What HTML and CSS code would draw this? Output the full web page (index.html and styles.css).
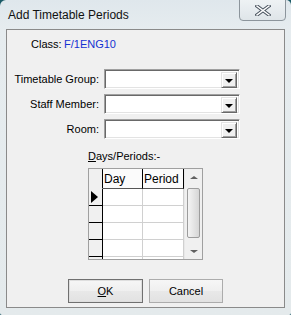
FILE: index.html
```html
<!DOCTYPE html><html><head><meta charset="utf-8">
<title>Add Timetable Periods</title>
<link rel="stylesheet" href="styles.css">
</head>
<body>

<div class="window">
	<div class="titlebar">
		<span class="title">Add Timetable Periods</span>
		<div class="close">
			<svg width="16" height="11" viewBox="0 0 16 11"><path d="M2 1 L14 10 M14 1 L2 10" stroke="#4b5560" stroke-width="3.4" stroke-linecap="square"/><path d="M2 1 L14 10 M14 1 L2 10" stroke="#fff" stroke-width="1.4" stroke-linecap="square"/></svg>
		</div>
	</div>
	<div class="client">
		<div class="classrow"><span class="clabel">Class:</span><span class="cval">F/1ENG10</span></div>

		<div class="form">
			<label>Timetable Group:</label>
			<div class="combo"><div class="drop"><span class="tri"></span></div></div>
			<label>Staff Member:</label>
			<div class="combo"><div class="drop"><span class="tri"></span></div></div>
			<label>Room:</label>
			<div class="combo"><div class="drop"><span class="tri"></span></div></div>
		</div>

		<div class="days"><u>D</u>ays/Periods:-</div>

		<div class="grid">
			<div class="tbl">
				<div class="sel head"></div><div class="cell head">Day</div><div class="cell head">Period</div>
				<div class="sel"><span class="arrow"></span></div><div class="cell"></div><div class="cell"></div>
				<div class="sel"></div><div class="cell"></div><div class="cell"></div>
				<div class="sel"></div><div class="cell"></div><div class="cell"></div>
				<div class="sel"></div><div class="cell"></div><div class="cell"></div>
				<div class="sel"></div><div class="cell"></div><div class="cell"></div>
			</div>
			<div class="scroll">
				<div class="sarrow up"></div>
				<div class="thumb"></div>
				<div class="sarrow down"></div>
			</div>
		</div>

		<div class="buttons">
			<div class="btn default"><u>O</u>K</div>
			<div class="btn">Cancel</div>
		</div>
	</div>
</div>

</body>
</html>
```

FILE: styles.css
```css
body {
	margin: 0;
	background: #1b5a66;
	font-family: "Liberation Sans", Arial, sans-serif;
	font-size: 11px;
	color: #000;
}
.window {
	width: 291px;
	height: 315px;
	box-sizing: border-box;
	border-radius: 6px 5px 2px 2px;
	background: linear-gradient(to bottom, #dfe7ec 0px, #e6ecef 30px, #e4eaec 100%);
	overflow: hidden;
}
.titlebar {
	height: 29px;
	display: flex;
	align-items: flex-start;
	position: relative;
}
.title {
	font-size: 12px;
	margin: 8px 0 0 8px;
	color: #111;
}
.close {
	position: absolute;
	left: 239px;
	top: -1px;
	width: 45px;
	height: 20px;
	border: 1px solid #8c959c;
	border-radius: 0 0 4px 4px;
	background: linear-gradient(to bottom, #eef2f4, #dfe5e9);
	display: flex;
	align-items: center;
	justify-content: center;
}
.client {
	margin: 0 6px 0 6px;
	width: 279px;
	height: 279px;
	box-sizing: border-box;
	border: 1px solid #8a8a8a;
	background: #f0f0f0;
	display: flex;
	flex-direction: column;
}
.classrow {
	margin: 8px 0 0 24px;
	line-height: 13px;
}
.clabel {
	display: inline-block;
	width: 33px;
}
.cval {
	color: #1432d2;
}
.form {
	display: grid;
	grid-template-columns: 92px 136px;
	column-gap: 5px;
	row-gap: 5px;
	margin-top: 18px;
	align-items: center;
}
.form label {
	text-align: right;
}
.combo {
	height: 20px;
	box-sizing: border-box;
	background: #fff;
	border-top: 1px solid #a0a0a0;
	border-left: 1px solid #a0a0a0;
	border-right: 1px solid #fff;
	border-bottom: 1px solid #fff;
	box-shadow: inset 1px 1px 0 #696969, inset -1px -1px 0 #e3e3e3;
	display: flex;
	justify-content: flex-end;
	padding: 2px;
}
.drop {
	width: 16px;
	height: 16px;
	box-sizing: border-box;
	background: #f0f0f0;
	border-top: 1px solid #e3e3e3;
	border-left: 1px solid #e3e3e3;
	border-right: 1px solid #696969;
	border-bottom: 1px solid #696969;
	box-shadow: inset 1px 1px 0 #fff, inset -1px -1px 0 #a0a0a0;
	display: flex;
	align-items: center;
	justify-content: center;
}
.tri {
	width: 0;
	height: 0;
	border-left: 4px solid transparent;
	border-right: 4px solid transparent;
	border-top: 4px solid #000;
	margin-top: 1px;
}
.days {
	margin: 11px 0 0 81px;
	line-height: 13px;
}
.grid {
	margin: 5px 0 0 81px;
	width: 115px;
	height: 92px;
	box-sizing: border-box;
	border: 1px solid #a0a0a0;
	background: #fff;
	display: flex;
	overflow: hidden;
}
.tbl {
	display: grid;
	grid-template-columns: 14px 40px 41px;
	grid-auto-rows: 17px;
	grid-template-rows: 20px;
	align-content: start;
}
.tbl > div {
	box-sizing: border-box;
	border-right: 1px solid #d0d0d0;
	border-bottom: 1px solid #d0d0d0;
}
.tbl .sel {
	background: #f0f0f0;
	border-right: 1px solid #000;
	border-bottom: 1px solid #000;
	display: flex;
	align-items: center;
}
.tbl .head {
	border-right: 1px solid #000;
	border-bottom: 1px solid #555;
	background: #fbfbfb;
	font-size: 12px;
	padding: 3px 0 0 1px;
}
.tbl .sel.head {
	padding: 0;
	background: #f0f0f0;
	border-bottom: 1px solid #f0f0f0;
}
.arrow {
	width: 0;
	height: 0;
	border-top: 6px solid transparent;
	border-bottom: 6px solid transparent;
	border-left: 7px solid #000;
	margin-left: 2px;
}
.scroll {
	width: 18px;
	background: #f0f0f0;
	display: flex;
	flex-direction: column;
	align-items: center;
	border-left: 1px solid #e8e8e8;
	box-sizing: border-box;
}
.sarrow {
	height: 17px;
	width: 100%;
	display: flex;
	align-items: center;
	justify-content: center;
}
.sarrow::after {
	content: "";
	width: 0;
	height: 0;
	border-left: 4px solid transparent;
	border-right: 4px solid transparent;
}
.up::after {
	border-bottom: 3px solid #606060;
}
.down::after {
	border-top: 3px solid #606060;
}
.thumb {
	margin-top: 2px;
	width: 13px;
	height: 50px;
	box-sizing: border-box;
	border: 1px solid #9c9c9c;
	border-radius: 2px;
	background: linear-gradient(to right, #f4f4f4, #e2e2e2 60%, #d6d6d6);
	flex: none;
}
.down {
	margin-top: auto;
	height: 15px;
}
.buttons {
	display: flex;
	gap: 6px;
	margin: 19px 0 0 61px;
}
.btn {
	width: 74px;
	height: 24px;
	box-sizing: border-box;
	border: 1px solid #acacac;
	background: linear-gradient(to bottom, #f6f6f6, #efefef 50%, #e8e8e8 51%, #e2e2e2);
	display: flex;
	align-items: center;
	justify-content: center;
}
.btn.default {
	width: 75px;
	border: 1px solid #707070;
	box-shadow: inset 0 0 0 1px #dedede;
}
```
